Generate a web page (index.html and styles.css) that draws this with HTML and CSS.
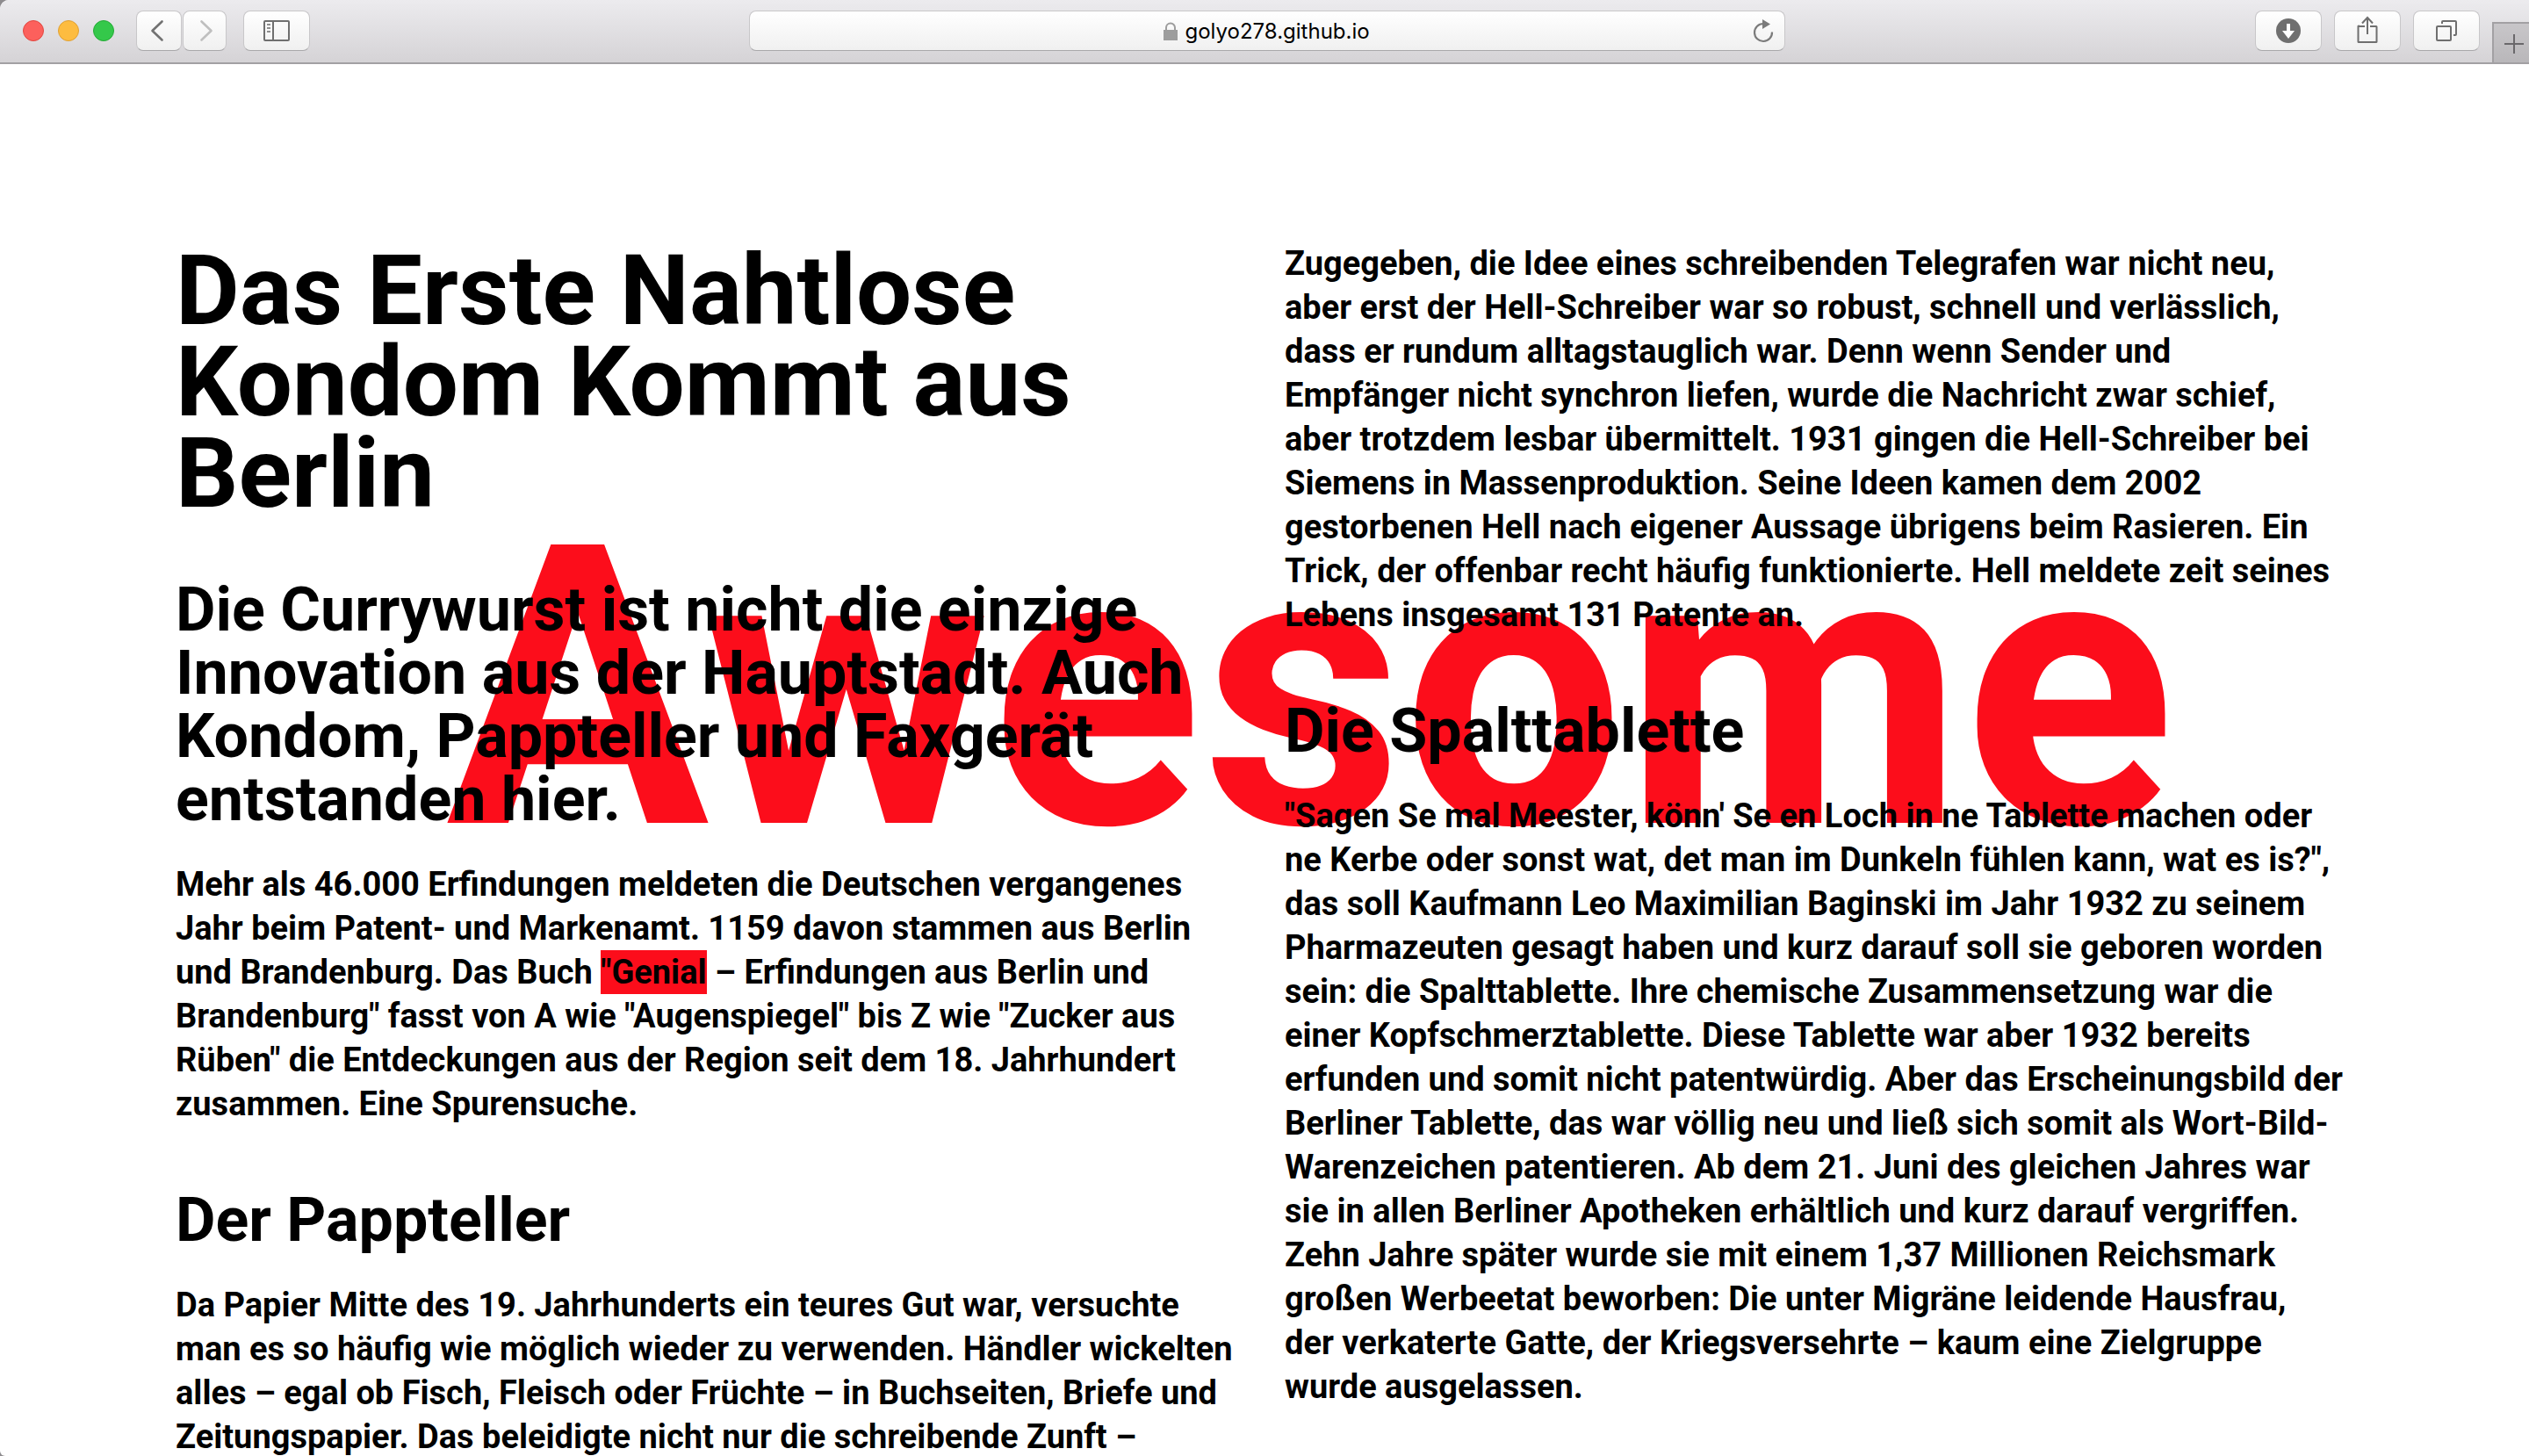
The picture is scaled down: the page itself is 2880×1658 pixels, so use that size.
FILE: index.html
```html
<!DOCTYPE html>
<html lang="de">
<head>
<meta charset="utf-8">
<meta name="viewport" content="width=device-width, initial-scale=1">
<title>Das Erste Nahtlose Kondom Kommt aus Berlin</title>
<link rel="stylesheet" href="styles.css">
</head>
<body>
<div class="window">
  <header class="toolbar">
    <div class="toolbar-start">
      <div class="lights">
        <button class="light light-close" aria-label="Schließen"></button>
        <button class="light light-minimize" aria-label="Minimieren"></button>
        <button class="light light-zoom" aria-label="Zoomen"></button>
      </div>
      <div class="history">
        <button class="tool tool-back" aria-label="Zurück">
          <svg width="52" height="46" viewBox="0 0 52 46" fill="none" stroke="#727272" stroke-width="2.6" stroke-linecap="round" stroke-linejoin="round"><path d="M29.5 12.5 18.5 23l11 10.500"/></svg>
        </button>
        <button class="tool tool-forward" aria-label="Vorwärts">
          <svg width="50" height="46" viewBox="0 0 50 46" fill="none" stroke="#bfbfbf" stroke-width="2.6" stroke-linecap="round" stroke-linejoin="round"><path d="M21.500 12.500l11 10.500-11 10.500"/></svg>
        </button>
      </div>
      <button class="tool" aria-label="Seitenleiste">
        <svg width="76" height="46" viewBox="0 0 76 46" fill="none" stroke="#6f6f6f" stroke-width="2"><rect x="24" y="12" width="28" height="22" rx="1"/><path d="M34 12v22"/><path d="M27 16h4M27 20h4M27 24h4" stroke="#8e8e8e" stroke-width="1.800"/></svg>
      </button>
    </div>

    <div class="address">
      <label class="address-field">
        <svg class="lock" width="16" height="22" viewBox="0 0 16 22"><path d="M3 11V6.500a5 5 0 0 1 10 0V11" fill="none" stroke="#9d9d9d" stroke-width="2"/><rect y="9" width="16" height="12" fill="#9d9d9d"/></svg>
        <input class="address-input" type="text" value="golyo278.github.io" aria-label="Adresse">
      </label>
      <button class="reload" aria-label="Neu laden">
        <svg width="24" height="30" viewBox="0 0 24 30"><path d="M12 6a10 10 0 1 0 10 9.500" fill="none" stroke="#7b7b7b" stroke-width="2.200"/><path d="M11 1l9 5.500-9 5.500z" fill="#7b7b7b"/></svg>
      </button>
    </div>

    <div class="toolbar-end">
      <button class="tool" aria-label="Downloads">
        <svg width="76" height="46" viewBox="0 0 76 46"><circle cx="38" cy="23" r="14" fill="#6f6f6f"/><path d="M36 15h4v8h5l-7 9-7-9h5z" fill="#fff"/></svg>
      </button>
      <button class="tool" aria-label="Teilen">
        <svg width="76" height="46" viewBox="0 0 76 46" fill="none" stroke="#6f6f6f" stroke-width="2"><path d="M35 18h-6.500a.5.5 0 0 0-1 .5V35.500a.5.5 0 0 0 .5.5h20a.5.5 0 0 0 .5-.5V18.500a.5.5 0 0 0-.5-.5H41"/><path d="M38 27V8.500M32 14.500l6-6.500 6 6.500"/></svg>
      </button>
      <button class="tool" aria-label="Alle Tabs">
        <svg width="76" height="46" viewBox="0 0 76 46" fill="none" stroke="#6f6f6f" stroke-width="2"><rect x="27" y="18" width="16" height="16" rx="1"/><path d="M33 15v-2a1 1 0 0 1 1-1h14a1 1 0 0 1 1 1v14a1 1 0 0 1-1 1h-2"/></svg>
      </button>
      <button class="new-tab" aria-label="Neuer Tab">
        <svg width="40" height="44" viewBox="0 0 40 44" fill="none" stroke="#6a686b" stroke-width="2"><path d="M12 23h22M23 12v22"/></svg>
      </button>
    </div>
  </header>

  <main class="page">
    <div class="shout">Awesome</div>
    <article class="article">
      <div class="column">
        <h1>Das Erste Nahtlose<br>Kondom Kommt aus<br>Berlin</h1>
        <h2 class="lead">Die Currywurst ist nicht die einzige<br>Innovation aus der Hauptstadt. Auch<br>Kondom, Pappteller und Faxgerät<br>entstanden hier.</h2>
        <p>Mehr als 46.000 Erfindungen meldeten die Deutschen vergangenes<br>Jahr beim Patent- und Markenamt. 1159 davon stammen aus Berlin<br>und Brandenburg. Das Buch <span class="hit">"Genial</span> – Erfindungen aus Berlin und<br>Brandenburg" fasst von A wie "Augenspiegel" bis Z wie "Zucker aus<br>Rüben" die Entdeckungen aus der Region seit dem 18. Jahrhundert<br>zusammen. Eine Spurensuche.</p>
        <h2>Der Pappteller</h2>
        <p>Da Papier Mitte des 19. Jahrhunderts ein teures Gut war, versuchte<br>man es so häufig wie möglich wieder zu verwenden. Händler wickelten<br>alles – egal ob Fisch, Fleisch oder Früchte – in Buchseiten, Briefe und<br>Zeitungspapier. Das beleidigte nicht nur die schreibende Zunft –</p>
      </div>
      <div class="column">
        <p>Zugegeben, die Idee eines schreibenden Telegrafen war nicht neu,<br>aber erst der Hell-Schreiber war so robust, schnell und verlässlich,<br>dass er rundum alltagstauglich war. Denn wenn Sender und<br>Empfänger nicht synchron liefen, wurde die Nachricht zwar schief,<br>aber trotzdem lesbar übermittelt. 1931 gingen die Hell-Schreiber bei<br>Siemens in Massenproduktion. Seine Ideen kamen dem 2002<br>gestorbenen Hell nach eigener Aussage übrigens beim Rasieren. Ein<br>Trick, der offenbar recht häufig funktionierte. Hell meldete zeit seines<br>Lebens insgesamt 131 Patente an.</p>
        <h2>Die Spalttablette</h2>
        <p>"Sagen Se mal Meester, könn' Se en Loch in ne Tablette machen oder<br>ne Kerbe oder sonst wat, det man im Dunkeln fühlen kann, wat es is?",<br>das soll Kaufmann Leo Maximilian Baginski im Jahr 1932 zu seinem<br>Pharmazeuten gesagt haben und kurz darauf soll sie geboren worden<br>sein: die Spalttablette. Ihre chemische Zusammensetzung war die<br>einer Kopfschmerztablette. Diese Tablette war aber 1932 bereits<br>erfunden und somit nicht patentwürdig. Aber das Erscheinungsbild der<br>Berliner Tablette, das war völlig neu und ließ sich somit als Wort-Bild-<br>Warenzeichen patentieren. Ab dem 21. Juni des gleichen Jahres war<br>sie in allen Berliner Apotheken erhältlich und kurz darauf vergriffen.<br>Zehn Jahre später wurde sie mit einem 1,37 Millionen Reichsmark<br>großen Werbeetat beworben: Die unter Migräne leidende Hausfrau,<br>der verkaterte Gatte, der Kriegsversehrte – kaum eine Zielgruppe<br>wurde ausgelassen.</p>
      </div>
    </article>
  </main>
</div>
</body>
</html>
```
FILE: styles.css
```css
* {
  box-sizing: border-box;
}

html {
  background: #8e8c8f;
}

body {
  margin: 0;
  color: #000;
  font-family: Roboto, "Liberation Sans", sans-serif;
}

button {
  padding: 0;
  border: 0;
  background: none;
}

svg {
  display: block;
}

.window {
  display: flex;
  flex-direction: column;
  height: 100vh;
  overflow: hidden;
  background: #fff;
  border-radius: 10px 0 0 6px;
}

/* Browser toolbar */

.toolbar {
  display: grid;
  grid-template-columns: 853fr 1180fr 847fr;
  flex: none;
  height: 73px;
  padding-bottom: 1px;
  border-bottom: 2px solid #a2a0a3;
  background: linear-gradient(#ecebee, #d5d3d6);
}

.toolbar-start,
.toolbar-end {
  display: flex;
  align-items: center;
}

.toolbar-start {
  padding-left: 26px;
}

.toolbar-end {
  justify-content: flex-end;
  gap: 14px;
}

.lights {
  display: flex;
  gap: 16px;
  margin-right: 25px;
}

.light {
  width: 24px;
  height: 24px;
  border: 1px solid;
  border-radius: 50%;
}

.light-close {
  border-color: #e2463f;
  background: #fc605c;
}

.light-minimize {
  border-color: #e0a033;
  background: #fdbc40;
}

.light-zoom {
  border-color: #24aa35;
  background: #34c84a;
}

.history {
  display: flex;
  gap: 1px;
  margin-right: 19px;
}

.tool,
.address {
  height: 46px;
  border: 1px solid #c8c7c9;
  border-bottom-color: #a9a8aa;
  border-radius: 8px;
  background: linear-gradient(#fff, #f0f0f0);
}

.tool {
  display: grid;
  place-content: center;
  width: 76px;
}

.tool-back {
  width: 52px;
}

.tool-forward {
  width: 50px;
}

.address {
  display: grid;
  grid-template-columns: 1fr auto 1fr;
  align-items: center;
  align-self: center;
  padding: 2px 12px 0;
}

.address-field {
  display: flex;
  grid-column: 2;
  align-items: center;
  gap: 9px;
}

.address-input {
  width: 212px;
  height: 32px;
  padding: 0;
  border: 0;
  outline: 0;
  background: none;
  color: #000;
  font: 24px/32px Inter, "Liberation Sans", sans-serif;
}

.reload {
  justify-self: end;
}

.new-tab {
  align-self: flex-end;
  width: 42px;
  height: 46px;
  margin-bottom: -1px;
  border: solid #a2a0a3;
  border-width: 2px 0 0 2px;
  background: linear-gradient(#c8c6c9, #b9b7ba);
}

/* Page */

.page {
  position: relative;
  z-index: 0;
  flex: 1;
  min-height: 0;
}

.shout {
  position: absolute;
  z-index: -1;
  top: 489px;
  left: 508px;
  color: #fc0d1b;
  font-size: 446px;
  font-weight: 700;
  line-height: 1;
  white-space: nowrap;
}

.article {
  display: grid;
  grid-template-columns: 1fr 1fr;
  gap: 46px;
  padding: 202px 200px 0;
  font-size: 38px;
  font-weight: 700;
  line-height: 50px;
  white-space: nowrap;
}

h1,
h2,
p {
  margin: 0;
}

h1 {
  margin: 4px 0 67px;
  font-size: 112px;
  font-weight: 700;
  line-height: 104px;
}

h2 {
  margin: 71px 0 36px;
  font-size: 70px;
  font-weight: 700;
  line-height: 72px;
}

.lead {
  margin-top: 0;
}

.hit {
  display: inline-block;
  background: #fc0d1b;
}
```
